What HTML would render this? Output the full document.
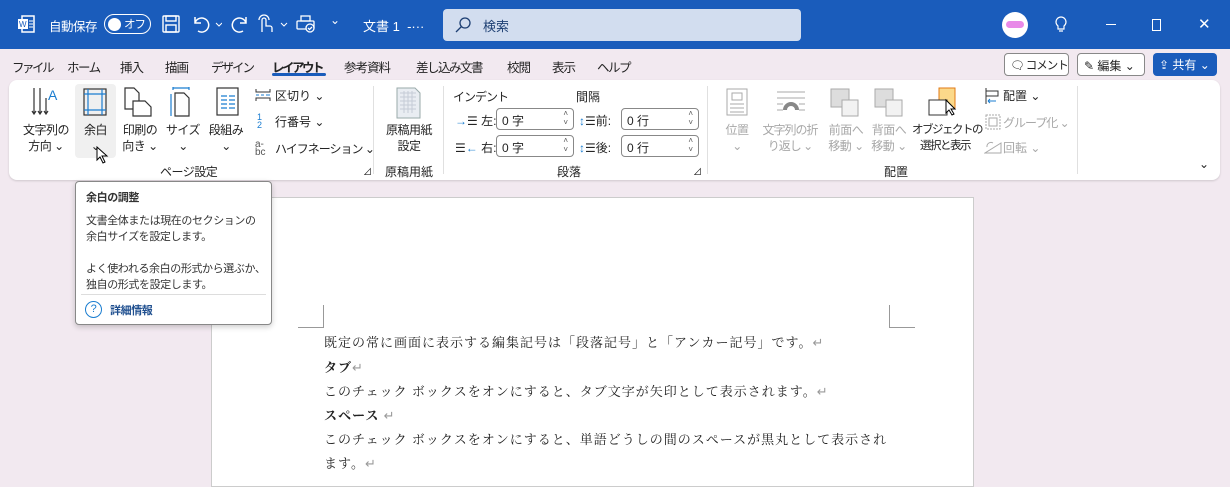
<!DOCTYPE html>
<html><head><meta charset="utf-8"><style>
*{margin:0;padding:0;box-sizing:border-box}
body{width:1230px;height:474px;overflow:hidden;background:#f2e9f0;font-family:"Liberation Sans","Noto Sans CJK JP",sans-serif;font-size:12px;color:#242424;position:relative}
.a{position:absolute;white-space:nowrap}
.tb{position:absolute;left:0;top:0;width:1230px;height:49px;background:#1a5cbb;color:#fff}
.tabs span{position:absolute;top:57px;font-size:12.5px;letter-spacing:-1px}
.rib{position:absolute;left:9px;top:80px;width:1211px;height:100px;background:#fff;border-radius:8px;box-shadow:0 1px 2px rgba(0,0,0,.15)}
.c{text-align:center;font-size:12px;line-height:16px;letter-spacing:-.5px}
.g{color:#a8a8a8}
.sep{position:absolute;top:86px;width:1px;height:88px;background:#e0e0e0}
.spin{position:absolute;width:78px;height:22px;border:1px solid #888;border-radius:4px;font-size:12px;padding:3px 5px;background:#fff}
.spin:after{content:"˄\A˅";white-space:pre;position:absolute;right:5px;top:0;font-size:8px;line-height:9px;color:#555}
.doc p{position:absolute;left:324px;font-family:"Liberation Serif","Noto Serif CJK SC",serif;font-size:13px;letter-spacing:1px;color:#222;white-space:nowrap}
</style></head><body>
<div class="tb">
 <svg class="a" style="left:17px;top:15px" width="18" height="18"><rect x="5" y="1" width="12" height="16" fill="none" stroke="#fff" stroke-width="1.5"/><rect x="1" y="4" width="10" height="10" fill="#fff"/><text x="2" y="12" font-size="8" fill="#1a5cbb" font-family="Liberation Sans">W</text><path d="M12 6h4M12 9h4M12 12h4" stroke="#fff"/></svg>
 <span class="a" style="left:49px;top:16px;font-size:12.5px;letter-spacing:-.5px">自動保存</span>
 <div class="a" style="left:104px;top:14px;width:47px;height:20px;border:1.5px solid #fff;border-radius:10px"><div style="position:absolute;left:3px;top:2.5px;width:13px;height:13px;border-radius:50%;background:#fff"></div><span style="position:absolute;left:19px;top:1px;font-size:11.5px;letter-spacing:-1px">オフ</span></div>
 <svg class="a" style="left:162px;top:15px" width="18" height="18" fill="none" stroke="#fff" stroke-width="1.4"><rect x="1" y="1" width="16" height="16" rx="1"/><rect x="4" y="1" width="10" height="5"/><rect x="4" y="10" width="10" height="7"/></svg>
 <svg class="a" style="left:192px;top:15px" width="30" height="18" fill="none" stroke="#fff" stroke-width="1.5"><path d="M3 2v6h6M3 8a7 7 0 1 1 3 8"/><path d="M24 8l3 3 3-3" stroke-width="1"/></svg>
 <svg class="a" style="left:231px;top:15px" width="18" height="18" fill="none" stroke="#fff" stroke-width="1.5"><path d="M15 2v6h-6M15 8a7 7 0 1 0-3 8"/></svg>
 <svg class="a" style="left:257px;top:14px" width="32" height="20" fill="none" stroke="#fff" stroke-width="1.3"><path d="M5 18V6a2 2 0 0 1 4 0v6h4a2 2 0 0 1 2 2v4M2 6a5 5 0 0 1 10 0"/><path d="M24 9l3 3 3-3" stroke-width="1"/></svg>
 <svg class="a" style="left:296px;top:15px" width="20" height="18" fill="none" stroke="#fff" stroke-width="1.3"><rect x="5" y="1" width="9" height="5"/><rect x="1" y="6" width="17" height="8" rx="1"/><circle cx="14" cy="13" r="4" fill="#1a5cbb"/><path d="M12 13l1.5 1.5L16 12"/></svg>
 <span class="a" style="left:330px;top:13px;font-size:12px">⌄</span>
 <span class="a" style="left:363px;top:16px;font-size:13px">文書 1&nbsp; -···</span>
 <div class="a" style="left:443px;top:9px;width:358px;height:32px;background:#d2ddef;border-radius:4px;color:#1d3f73"><svg class="a" style="left:12px;top:8px" width="16" height="16" fill="none" stroke="#1d3f73" stroke-width="1.3"><circle cx="10" cy="6" r="5"/><path d="M6.5 9.5L1 15"/></svg><span class="a" style="left:40px;top:7px;font-size:13px">検索</span></div>
 <div class="a" style="left:1002px;top:12px;width:26px;height:26px;border-radius:50%;background:#fff"><div style="position:absolute;left:4px;top:9px;width:18px;height:7px;background:#e88ae8;border-radius:4px"></div></div>
 <svg class="a" style="left:1054px;top:14px" width="14" height="20" fill="none" stroke="#fff" stroke-width="1.2"><path d="M4 12a5 5 0 1 1 6 0v3H4z M5 17h4"/></svg>
 <div class="a" style="left:1106px;top:24px;width:10px;height:1px;background:#fff"></div>
 <div class="a" style="left:1152px;top:19px;width:9px;height:12px;border:1px solid #fff"></div>
 <span class="a" style="left:1198px;top:15px;font-size:15px">✕</span>
</div>
<div class="tabs">
 <span style="left:12px;letter-spacing:-2.5px">ファイル</span><span style="left:67px;letter-spacing:-1.5px">ホーム</span><span style="left:120px">挿入</span><span style="left:165px">描画</span><span style="left:211px;letter-spacing:-2px">デザイン</span><span style="left:272px;font-weight:bold;letter-spacing:-2.5px">レイアウト</span><span style="left:344px">参考資料</span><span style="left:416px;letter-spacing:-1.5px">差し込み文書</span><span style="left:507px">校閲</span><span style="left:552px">表示</span><span style="left:597px;letter-spacing:-1.5px">ヘルプ</span>
</div>
<div class="a" style="left:272px;top:73px;width:54px;height:3px;background:#1a5cbb;border-radius:2px"></div>
<div class="a" style="left:1004px;top:53px;width:65px;height:23px;border:1px solid #888;border-radius:4px;background:#fff;font-size:11.5px;letter-spacing:-1px;padding:3px 0 0 5px">🗨 コメント</div>
<div class="a" style="left:1077px;top:53px;width:68px;height:23px;border:1px solid #888;border-radius:4px;background:#fff;font-size:12px;padding:3px 0 0 6px">✎ 編集 ⌄</div>
<div class="a" style="left:1153px;top:53px;width:64px;height:23px;border-radius:4px;background:#1a5cbb;color:#fff;font-size:12px;padding:3px 0 0 6px">⇪ 共有 ⌄</div>

<div class="rib"></div>
<svg class="a" style="left:30px;top:86px" width="32" height="32" fill="none" stroke="#333" stroke-width="1.2"><path d="M4 2v26M2 25l2 3 2-3M10 2v26M8 25l2 3 2-3M16 12v16M14 25l2 3 2-3"/><text x="18" y="14" font-size="14" fill="#1a7dd0" stroke="none" font-family="Liberation Sans">A</text></svg>
<div class="a c" style="left:17px;top:122px;width:58px">文字列の<br>方向 ⌄</div>
<div class="a" style="left:75px;top:84px;width:41px;height:74px;background:#f0f0f0;border-radius:4px"></div>
<svg class="a" style="left:83px;top:88px" width="24" height="28" fill="none" stroke-width="1.2"><rect x="1" y="1" width="22" height="26" stroke="#333"/><path d="M5 1v26M19 1v26M1 6h22M1 22h22" stroke="#1a7dd0"/></svg>
<div class="a c" style="left:75px;top:122px;width:41px">余白<br>⌄</div>
<svg class="a" style="left:96px;top:146px" width="14" height="18"><path d="M1 1v13l3-3 3 6 2-1-3-6h5z" fill="#fff" stroke="#000"/></svg>
<svg class="a" style="left:124px;top:87px" width="30" height="30" fill="none" stroke="#333" stroke-width="1.2"><path d="M1 1h9l5 5v16H1z"/><path d="M9 14h12l6 6v9H9z" fill="#fff"/></svg>
<div class="a c" style="left:117px;top:122px;width:46px">印刷の<br>向き ⌄</div>
<svg class="a" style="left:169px;top:86px" width="24" height="32" fill="none" stroke-width="1.2"><path d="M4 2h16M4 1v3M20 1v3" stroke="#1a7dd0"/><path d="M2 8v22" stroke="#1a7dd0"/><path d="M6 7h9l5 5v18H6z" stroke="#333"/></svg>
<div class="a c" style="left:163px;top:122px;width:40px">サイズ<br>⌄</div>
<svg class="a" style="left:216px;top:87px" width="24" height="30" fill="none" stroke-width="1.2"><rect x="1" y="1" width="21" height="27" stroke="#333"/><path d="M5 9h6M13 9h6M5 13h6M13 13h6M5 17h6M13 17h6M5 21h6M13 21h6" stroke="#1a7dd0"/></svg>
<div class="a c" style="left:204px;top:122px;width:44px">段組み<br>⌄</div>
<svg class="a" style="left:255px;top:88px" width="16" height="14" fill="none" stroke="#333"><path d="M1 1v3h14V1M1 13v-3h14v3"/><path d="M1 7h3M6 7h3M11 7h4" stroke="#1a7dd0"/></svg><span class="a" style="left:275px;top:87px">区切り ⌄</span>
<span class="a" style="left:257px;top:113px;color:#1a7dd0;font-size:9px;line-height:8px">1<br>2</span><span class="a" style="left:275px;top:113px">行番号 ⌄</span>
<span class="a" style="left:255px;top:139px;font-size:10px;color:#555">a-</span><span class="a" style="left:255px;top:147px;font-size:10px;color:#555">bc</span><span class="a" style="left:275px;top:140px;letter-spacing:-1px">ハイフネーション ⌄</span>
<span class="a" style="left:160px;top:163px;letter-spacing:-.5px">ページ設定</span><span class="a" style="left:363px;top:165px;font-size:9px">⊿</span>
<div class="sep" style="left:373px"></div>
<svg class="a" style="left:396px;top:87px" width="26" height="32"><path d="M1 1h18l5 5v25H1z" fill="#e9edf2" stroke="#9aa"/><g stroke="#c5ccd6"><path d="M4 6h16M4 10h16M4 14h16M4 18h16M4 22h16M8 4v22M12 4v22M16 4v22"/></g></svg>
<div class="a c" style="left:380px;top:122px;width:58px">原稿用紙<br>設定</div>
<span class="a" style="left:385px;top:163px">原稿用紙</span>
<div class="sep" style="left:443px"></div>
<span class="a" style="left:453px;top:88px;letter-spacing:-1px">インデント</span><span class="a" style="left:576px;top:88px">間隔</span>
<span class="a" style="left:455px;top:112px"><b style="color:#1a7dd0;font-weight:normal">→</b>☰ 左:</span>
<span class="a" style="left:455px;top:139px">☰<b style="color:#1a7dd0;font-weight:normal">←</b> 右:</span>
<div class="spin" style="left:496px;top:108px">0 字</div><div class="spin" style="left:496px;top:135px">0 字</div>
<span class="a" style="left:579px;top:112px"><b style="color:#1a7dd0">↕</b>☰前:</span>
<span class="a" style="left:579px;top:139px"><b style="color:#1a7dd0">↕</b>☰後:</span>
<div class="spin" style="left:621px;top:108px">0 行</div><div class="spin" style="left:621px;top:135px">0 行</div>
<span class="a" style="left:557px;top:163px">段落</span><span class="a" style="left:693px;top:165px;font-size:9px">⊿</span>
<div class="sep" style="left:707px"></div>
<svg class="a" style="left:726px;top:88px" width="22" height="28" fill="none" stroke="#aaa"><rect x="1" y="1" width="20" height="26"/><rect x="6" y="5" width="10" height="7"/><path d="M4 16h14M4 20h14M4 24h14"/></svg>
<div class="a c g" style="left:718px;top:122px;width:38px">位置<br>⌄</div>
<svg class="a" style="left:776px;top:90px" width="30" height="24" fill="none" stroke="#aaa"><path d="M1 2h28M1 8h28M1 14h6M23 14h6M1 20h6M23 20h6"/><path d="M9 20a6 6 0 0 1 12 0" stroke-width="4" stroke="#888"/></svg>
<div class="a c g" style="left:759px;top:122px;width:62px;letter-spacing:-1px">文字列の折<br>り返し ⌄</div>
<svg class="a" style="left:830px;top:88px" width="30" height="30"><rect x="1" y="1" width="18" height="18" fill="#ddd" stroke="#aaa"/><rect x="12" y="12" width="16" height="16" fill="#f2f2f2" stroke="#aaa"/></svg>
<div class="a c g" style="left:825px;top:122px;width:42px">前面へ<br>移動 ⌄</div>
<svg class="a" style="left:874px;top:88px" width="30" height="30"><rect x="1" y="1" width="18" height="18" fill="#ddd" stroke="#aaa"/><rect x="12" y="12" width="16" height="16" fill="#f2f2f2" stroke="#aaa"/></svg>
<div class="a c g" style="left:868px;top:122px;width:42px">背面へ<br>移動 ⌄</div>
<svg class="a" style="left:928px;top:87px" width="34" height="32"><rect x="11" y="1" width="16" height="20" fill="#fbd98a" stroke="#e07a16"/><rect x="1" y="13" width="18" height="15" fill="#fff" stroke="#333"/><path d="M18 13v13l3-3 3 5 2-1-3-5h4z" fill="#fff" stroke="#000"/></svg>
<div class="a c" style="left:912px;top:122px;width:66px;font-size:11.5px;letter-spacing:-1.5px">オブジェクトの<br>選択と表示</div>
<svg class="a" style="left:984px;top:87px" width="18" height="18" fill="none" stroke="#333"><path d="M2 1v16M2 4h12v5H2"/><path d="M4 14h8M4 14l2-2M4 14l2 2" stroke="#1a7dd0"/></svg><span class="a" style="left:1003px;top:87px">配置 ⌄</span>
<svg class="a" style="left:984px;top:113px" width="18" height="18" fill="none" stroke="#aaa" stroke-dasharray="2 1"><rect x="2" y="2" width="14" height="14"/><rect x="5" y="5" width="8" height="8" stroke-dasharray="0"/></svg><span class="a g" style="left:1003px;top:114px;letter-spacing:-1px">グループ化 ⌄</span>
<svg class="a" style="left:984px;top:139px" width="18" height="16" fill="none" stroke="#aaa"><path d="M1 14h16L17 4z"/><path d="M3 8a4 4 0 0 1 6-4"/></svg><span class="a g" style="left:1003px;top:139px">回転 ⌄</span>
<span class="a" style="left:884px;top:163px">配置</span>
<div class="sep" style="left:1077px"></div>
<span class="a" style="left:1199px;top:157px">⌄</span>
<div class="a" style="left:211px;top:197px;width:763px;height:290px;background:#fff;border:1px solid #ccc"></div>
<div class="a" style="left:323px;top:305px;width:1px;height:22px;background:#999"></div><div class="a" style="left:298px;top:327px;width:26px;height:1px;background:#999"></div>
<div class="a" style="left:889px;top:305px;width:1px;height:22px;background:#999"></div><div class="a" style="left:889px;top:327px;width:26px;height:1px;background:#999"></div>
<div class="doc">
<p style="top:332px">既定の常に画面に表示する編集記号は「段落記号」と「アンカー記号」です。<span style="color:#999">↵</span></p>
<p style="top:357px;font-weight:bold">タブ<span style="color:#999;font-weight:normal">↵</span></p>
<p style="top:381px">このチェック ボックスをオンにすると、タブ文字が矢印として表示されます。<span style="color:#999">↵</span></p>
<p style="top:405px;font-weight:bold">スペース <span style="color:#999;font-weight:normal">↵</span></p>
<p style="top:429px">このチェック ボックスをオンにすると、単語どうしの間のスペースが黒丸として表示され</p>
<p style="top:453px">ます。<span style="color:#999">↵</span></p>
</div>
<div class="a" style="left:75px;top:181px;width:197px;height:144px;background:#fff;border:1px solid #888;border-radius:4px;box-shadow:0 2px 6px rgba(0,0,0,.2);font-size:11px;letter-spacing:-.4px;color:#333">
 <div style="position:absolute;left:10px;top:7px;font-weight:bold">余白の調整</div>
 <div style="position:absolute;left:10px;top:31px;line-height:16px">文書全体または現在のセクションの<br>余白サイズを設定します。<br><br>よく使われる余白の形式から選ぶか、<br>独自の形式を設定します。</div>
 <div style="position:absolute;left:5px;right:5px;top:112px;height:1px;background:#ddd"></div>
 <div style="position:absolute;left:9px;top:119px;width:17px;height:17px;border:1.3px solid #1a7dd0;border-radius:50%;color:#1a7dd0;font-size:11px;text-align:center;line-height:15px">?</div>
 <div style="position:absolute;left:34px;top:120px;color:#1f4f8f;font-weight:bold">詳細情報</div>
</div>
</body></html>
